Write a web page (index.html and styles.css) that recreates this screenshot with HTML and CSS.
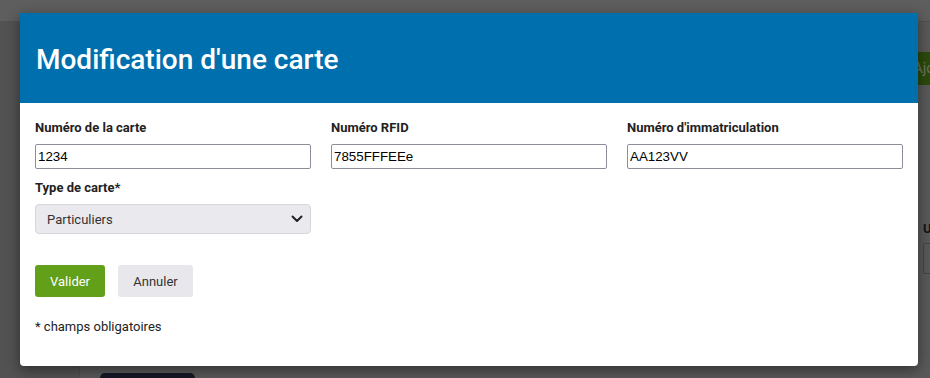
FILE: index.html
```html
<!DOCTYPE html>
<html lang="fr">
<head>
<meta charset="utf-8">
<link rel="stylesheet" href="styles.css">
</head>
<body>
<div class="page">
  <div class="topbar"></div>
  <div class="layout">
    <aside class="sidebar"></aside>
    <main class="main">
      <div class="toolbar"><span class="add-btn">Ajouter</span></div>
      <div class="side-field">
        <span class="side-label">Utilisateur</span>
        <span class="side-input"></span>
      </div>
      <div class="dark-btn"></div>
    </main>
  </div>
</div>

<div class="modal">
  <header class="modal-header">
    <h1 class="modal-title">Modification d'une carte</h1>
  </header>
  <form class="modal-body">
    <div class="fields">
      <label class="field">
        <span class="field-label">Numéro de la carte</span>
        <input class="text-input" type="text" value="1234">
      </label>
      <label class="field">
        <span class="field-label">Numéro RFID</span>
        <input class="text-input" type="text" value="7855FFFEEe">
      </label>
      <label class="field">
        <span class="field-label">Numéro d'immatriculation</span>
        <input class="text-input" type="text" value="AA123VV">
      </label>
      <label class="field">
        <span class="field-label">Type de carte*</span>
        <span class="select">
          <span class="select-value">Particuliers</span>
          <svg class="chevron" width="12" height="8" viewBox="0 0 12 8"><path d="M1.5 1.5 L6 6 L10.5 1.5" fill="none" stroke="#222" stroke-width="2" stroke-linecap="round" stroke-linejoin="round"/></svg>
        </span>
      </label>
    </div>
    <div class="actions">
      <button class="btn btn-primary" type="button">Valider</button>
      <button class="btn btn-secondary" type="button">Annuler</button>
    </div>
    <p class="note">* champs obligatoires</p>
  </form>
</div>
</body>
</html>
```
FILE: styles.css
```css
* { box-sizing: border-box; }
html, body { margin: 0; padding: 0; }
body {
  width: 930px;
  height: 378px;
  overflow: hidden;
  background: #595959;
  font-family: Roboto, "Liberation Sans", sans-serif;
  position: relative;
}
.page { width: 930px; height: 378px; display: flex; flex-direction: column; overflow: hidden; }
.topbar { height: 22px; background: #5e5e5e; border-bottom: 1px solid #515151; flex: none; }
.layout { flex: 1; display: flex; min-height: 0; }
.sidebar { width: 80px; background: #525252; border-right: 1px solid #4c4c4c; }
.main { flex: 1; display: flex; flex-direction: column; padding-left: 20px; }
.main > * { flex-shrink: 0; }
.toolbar { display: flex; justify-content: flex-end; padding-top: 30px; margin-right: -60px; }
.add-btn {
  height: 33px;
  width: 80px;
  background: #2c4a0c;
  color: #6c7560;
  font-size: 15px;
  line-height: 33px;
  padding-left: 3px;
  border-radius: 3px;
}
.side-field { display: flex; flex-direction: column; align-items: flex-end; margin-top: 136px; margin-right: -80px; }
.side-label { width: 87px; font-size: 13px; line-height: 15px; font-weight: 700; color: #151515; }
.side-input { width: 87px; height: 31px; margin-top: 7px; border: 1px solid #444; border-radius: 2px; }
.dark-btn { width: 95px; height: 20px; margin-top: 99px; background: #151824; border-radius: 5px; }

.modal {
  position: absolute;
  left: 20px;
  top: 13px;
  width: 898px;
  height: 353px;
  background: #fff;
  border-radius: 0 0 4px 4px;
  box-shadow: 0 4px 14px rgba(0,0,0,0.45);
  overflow: hidden;
}
.modal-header {
  height: 90px;
  background: #006fad;
  display: flex;
  align-items: center;
  padding-left: 16px;
}
.modal-title {
  margin: 0;
  color: #fff;
  font-size: 28px;
  font-weight: 500;
  letter-spacing: 0;
  padding-top: 2px;
}
.modal-body { padding: 16px 16px 0 15px; }
.fields {
  display: grid;
  grid-template-columns: repeat(3, 275px);
  column-gap: 21px;
  row-gap: 10px;
}
.field { display: flex; flex-direction: column; }
.field-label {
  font-size: 13px;
  font-weight: 700;
  color: #222;
  line-height: 18px;
  margin-bottom: 7px;
}
.text-input {
  height: 25px;
  width: 276px;
  border: 1px solid #8e8c9a;
  border-radius: 2px;
  padding: 1px 2px;
  font-family: "Liberation Sans", Arial, sans-serif;
  font-size: 13.33px;
  color: #000;
  background: #fff;
  outline: none;
}
.select {
  height: 30px;
  width: 276px;
  display: flex;
  align-items: center;
  justify-content: space-between;
  background: #e9e9ee;
  border: 1px solid #d6d6dc;
  border-radius: 4px;
  padding: 0 5px 0 11px;
}
.select-value { font-size: 13px; color: #333; }
.chevron { margin-right: 2px; }
.actions { display: flex; gap: 13px; margin-top: 31px; }
.btn {
  height: 32px;
  border: none;
  border-radius: 3px;
  font-family: Roboto, "Liberation Sans", sans-serif;
  font-size: 13px;
  padding: 0 15px;
}
.btn-primary { background: #62a01a; color: #fff; width: 70px; }
.btn-secondary { background: #e8e8ec; color: #333; width: 75px; }
.note { margin: 21px 0 0; font-size: 13px; color: #222; line-height: 18px; }
```
